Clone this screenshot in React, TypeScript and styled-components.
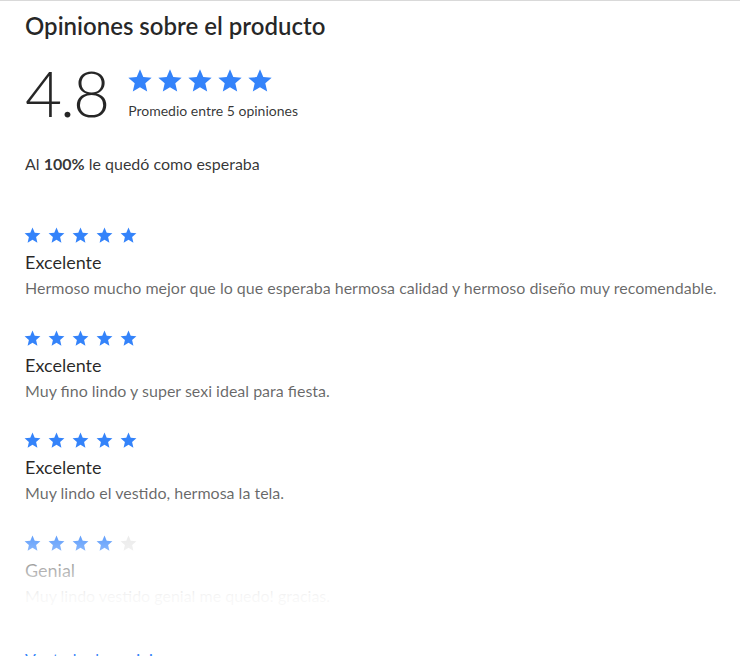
import React from 'react';
import styled, {createGlobalStyle} from "styled-components";

const GlobalStyle = createGlobalStyle`
  body {
    margin: 0;
    background: #fff;
    font-family: Lato, "Liberation Sans", sans-serif;
    color: rgba(0, 0, 0, .9);
  }
`

type Review = {
    rating: number;
    title: string;
    text: string;
};

const reviews: Review[] = [
    {rating: 5, title: 'Excelente', text: 'Hermoso mucho mejor que lo que esperaba hermosa calidad y hermoso diseño muy recomendable.'},
    {rating: 5, title: 'Excelente', text: 'Muy fino lindo y super sexi ideal para fiesta.'},
    {rating: 5, title: 'Excelente', text: 'Muy lindo el vestido, hermosa la tela.'},
    {rating: 4, title: 'Genial', text: 'Muy lindo vestido genial me quedo! gracias.'},
];

const Star: React.FC<{ size: number; filled: boolean }> = ({size, filled}) => (
    <svg width={size} height={size} viewBox="0 0 24 24">
        <path
            d="M12 17.27L18.18 21l-1.64-7.03L22 9.24l-7.19-.61L12 2 9.19 8.63 2 9.24l5.46 4.73L5.82 21z"
            fill={filled ? '#3483fa' : '#e6e6e6'}
        />
    </svg>
);

const Stars: React.FC<{ value: number; size: number; gap: number }> = ({value, size, gap}) => (
    <StarRow $gap={gap}>
        {[1, 2, 3, 4, 5].map(i => <Star key={i} size={size} filled={i <= value}/>)}
    </StarRow>
);

export default function App() {
    return (
        <Section>
            <GlobalStyle/>
            <Title>Opiniones sobre el producto</Title>
            <Summary>
                <Average>4.8</Average>
                <SummaryInfo>
                    <Stars value={5} size={28} gap={2}/>
                    <Count>Promedio entre 5 opiniones</Count>
                </SummaryInfo>
            </Summary>
            <Expectation>Al <b>100%</b> le quedó como esperaba</Expectation>
            <ReviewList>
                {reviews.map((r, i) => (
                    <ReviewItem key={i}>
                        <Stars value={r.rating} size={19} gap={5}/>
                        <ReviewTitle>{r.title}</ReviewTitle>
                        <ReviewText>{r.text}</ReviewText>
                    </ReviewItem>
                ))}
                <Fade/>
            </ReviewList>
            <MoreLink href="#">Ver todas las opiniones</MoreLink>
        </Section>
    );
}

const Section = styled.section`
  border-top: 1px solid #d9d9d9;
  padding: 10px 20px 0 25px;
  height: 656px;
  overflow: hidden;
  box-sizing: border-box;
`

const Title = styled.h2`
  margin: 0;
  font-size: 24px;
  font-weight: 600;
  line-height: 30px;
  color: rgba(0, 0, 0, .85);
`

const Summary = styled.div`
  display: flex;
  align-items: center;
  gap: 20px;
  margin-top: 19px;
`

const Average = styled.div`
  font-size: 64px;
  font-weight: 300;
  line-height: 66px;
  color: rgba(0, 0, 0, .85);
  letter-spacing: -2px;
`

const SummaryInfo = styled.div`
  display: flex;
  flex-direction: column;
  gap: 8px;
`

const StarRow = styled.div<{ $gap: number }>`
  display: flex;
  gap: ${p => p.$gap}px;
  margin-left: -2px;

  svg {
    display: block;
  }
`

const Count = styled.div`
  font-size: 14px;
  line-height: 16px;
  color: rgba(0, 0, 0, .8);
`

const Expectation = styled.p`
  margin: 28px 0 0;
  font-size: 16px;
  line-height: 20px;
  color: rgba(0, 0, 0, .8);

  b {
    font-weight: 700;
  }
`

const ReviewList = styled.div`
  position: relative;
  margin-top: 52px;
  display: flex;
  flex-direction: column;
  gap: 30.5px;
`

const ReviewItem = styled.article`
  display: flex;
  flex-direction: column;
`

const ReviewTitle = styled.div`
  margin-top: 6px;
  font-size: 18px;
  line-height: 22px;
  color: rgba(0, 0, 0, .85);
`

const ReviewText = styled.p`
  margin: 5px 0 0;
  font-size: 16px;
  line-height: 20px;
  color: rgba(0, 0, 0, .6);
`

const Fade = styled.div`
  position: absolute;
  left: -25px;
  right: -20px;
  bottom: 0;
  height: 90px;
  background: linear-gradient(to bottom, rgba(255, 255, 255, 0), rgba(255, 255, 255, .95) 90%);
  pointer-events: none;
`

const MoreLink = styled.a`
  display: block;
  margin-top: 43px;
  font-size: 16px;
  line-height: 20px;
  color: #3483fa;
  text-decoration: none;
`
